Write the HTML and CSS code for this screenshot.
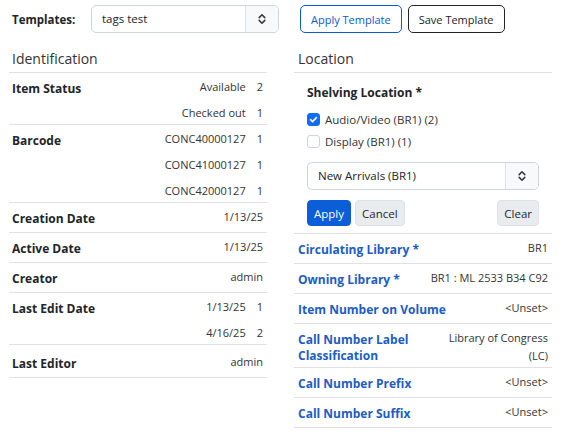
FILE: index.html
```html
<!DOCTYPE html>
<html lang="en">
<head>
<meta charset="utf-8">
<title>Item Attributes</title>
<link rel="stylesheet" href="styles.css">
</head>
<body>
<div class="toolbar">
  <span class="tpl-label">Templates:</span>
  <div class="select select-top">
    <span class="select-text">tags test</span>
    <span class="select-btn"><svg width="8" height="12" viewBox="0 0 8 12"><path d="M1.2 4.6 L4 1.8 L6.8 4.6 M1.2 7.4 L4 10.2 L6.8 7.4" fill="none" stroke="#343a40" stroke-width="1.6" stroke-linecap="round" stroke-linejoin="round"/></svg></span>
  </div>
  <div class="tpl-actions">
    <button class="btn btn-outline-primary">Apply Template</button>
    <button class="btn btn-outline-dark">Save Template</button>
  </div>
</div>

<div class="columns">
  <section class="col">
    <h2 class="col-title">Identification</h2>
    <div class="row">
      <div class="label">Item Status</div>
      <div class="values">
        <div class="val">Available<span class="count">2</span></div>
        <div class="val">Checked out<span class="count">1</span></div>
      </div>
    </div>
    <div class="row">
      <div class="label">Barcode</div>
      <div class="values">
        <div class="val">CONC40000127<span class="count">1</span></div>
        <div class="val">CONC41000127<span class="count">1</span></div>
        <div class="val">CONC42000127<span class="count">1</span></div>
      </div>
    </div>
    <div class="row">
      <div class="label">Creation Date</div>
      <div class="values"><div class="val">1/13/25</div></div>
    </div>
    <div class="row">
      <div class="label">Active Date</div>
      <div class="values"><div class="val">1/13/25</div></div>
    </div>
    <div class="row">
      <div class="label">Creator</div>
      <div class="values"><div class="val">admin</div></div>
    </div>
    <div class="row">
      <div class="label">Last Edit Date</div>
      <div class="values">
        <div class="val">1/13/25<span class="count">1</span></div>
        <div class="val">4/16/25<span class="count">2</span></div>
      </div>
    </div>
    <div class="row row-tall">
      <div class="label">Last Editor</div>
      <div class="values"><div class="val">admin</div></div>
    </div>
  </section>

  <section class="col">
    <h2 class="col-title">Location</h2>
    <div class="shelving">
      <div class="shelving-title">Shelving Location *</div>
      <div class="checks">
        <label class="check"><span class="box box-checked"><svg width="9" height="9" viewBox="0 0 9 9"><path d="M1.6 4.7 L3.6 6.6 L7.4 2.6" fill="none" stroke="#fff" stroke-width="1.6" stroke-linecap="round" stroke-linejoin="round"/></svg></span>Audio/Video (BR1) (2)</label>
        <label class="check"><span class="box"></span>Display (BR1) (1)</label>
      </div>
      <div class="select select-loc">
        <span class="select-text">New Arrivals (BR1)</span>
        <span class="select-btn"><svg width="8" height="12" viewBox="0 0 8 12"><path d="M1.2 4.6 L4 1.8 L6.8 4.6 M1.2 7.4 L4 10.2 L6.8 7.4" fill="none" stroke="#343a40" stroke-width="1.6" stroke-linecap="round" stroke-linejoin="round"/></svg></span>
      </div>
      <div class="shelving-actions">
        <button class="btn btn-sm btn-primary">Apply</button>
        <button class="btn btn-sm btn-light">Cancel</button>
        <button class="btn btn-sm btn-light btn-push">Clear</button>
      </div>
    </div>
    <div class="row">
      <div class="label label-link">Circulating Library *</div>
      <div class="values"><div class="val">BR1</div></div>
    </div>
    <div class="row">
      <div class="label label-link">Owning Library *</div>
      <div class="values"><div class="val">BR1 : ML 2533 B34 C92</div></div>
    </div>
    <div class="row">
      <div class="label label-link">Item Number on Volume</div>
      <div class="values"><div class="val">&lt;Unset&gt;</div></div>
    </div>
    <div class="row">
      <div class="label label-link">Call Number Label Classification</div>
      <div class="values values-narrow"><div class="val">Library of Congress (LC)</div></div>
    </div>
    <div class="row">
      <div class="label label-link">Call Number Prefix</div>
      <div class="values"><div class="val">&lt;Unset&gt;</div></div>
    </div>
    <div class="row">
      <div class="label label-link">Call Number Suffix</div>
      <div class="values"><div class="val">&lt;Unset&gt;</div></div>
    </div>
  </section>
</div>
</body>
</html>
```

FILE: styles.css
```css
* { box-sizing: border-box; }

body {
  margin: 0;
  font-family: "Open Sans", "Noto Sans", sans-serif;
  color: #212529;
  background: #fff;
}

.toolbar {
  display: flex;
  align-items: center;
  padding: 5px 0 0 12px;
}

.tpl-label {
  width: 79px;
  font-weight: 700;
  font-size: 11.5px;
}

.select {
  display: flex;
  height: 28px;
  border: 1px solid #ced4da;
  border-radius: 5px;
  overflow: hidden;
  background: #fff;
}

.select-top { width: 188px; }

.select-text {
  flex: 1;
  padding-left: 10px;
  font-size: 11.5px;
  line-height: 26px;
  color: #212529;
}

.select-btn {
  width: 33px;
  display: flex;
  align-items: center;
  justify-content: center;
  background: #f8f9fa;
  border-left: 1px solid #dee2e6;
}

.tpl-actions {
  display: flex;
  gap: 6px;
  margin-left: 21px;
}

.btn {
  font-family: inherit;
  font-size: 11px;
  height: 28px;
  padding: 0 10px;
  border-radius: 5px;
  background: #fff;
}

.btn-outline-primary { border: 1px solid #0d5bd1; color: #0d5bd1; }
.btn-outline-dark { border: 1px solid #212529; color: #212529; }

.columns {
  display: grid;
  grid-template-columns: 258px 258px;
  column-gap: 27px;
  padding-left: 9px;
}

.col-title {
  margin: 16px 0 0;
  padding: 0 3px 3px;
  font-size: 14px;
  font-weight: 500;
  line-height: 20px;
  color: #333;
  border-bottom: 1px solid #dee2e6;
}

.col + .col .col-title { padding-left: 4px; }

.row {
  display: flex;
  justify-content: space-between;
  gap: 8px;
  min-height: 30px;
  padding: 5px 4px 2px 3px;
  border-bottom: 1px solid #dee2e6;
}

.row-tall {
  min-height: 33px;
  padding-top: 8px;
}

.label {
  padding-top: 3px;
  font-size: 12px;
  font-weight: 700;
  line-height: 16px;
  color: #212529;
}

.label-link {
  color: #1c5cc7;
  padding-left: 1px;
}

.values {
  flex: 0 0 auto;
  text-align: right;
  font-size: 11px;
  color: #333;
}

.values-narrow { max-width: 118px; }

.val { line-height: 18px; }
.val + .val { margin-top: 8px; }

.count {
  display: inline-block;
  margin-left: 11px;
}

.shelving {
  padding: 11px 13px 7px;
  border-bottom: 1px solid #dee2e6;
}

.shelving-title {
  font-size: 12px;
  font-weight: 700;
  line-height: 18px;
}

.checks { margin-top: 6px; }

.check {
  display: flex;
  align-items: center;
  height: 22px;
  font-size: 11.5px;
  color: #333;
}

.box {
  width: 13px;
  height: 13px;
  margin-right: 5px;
  border: 1px solid #ced4da;
  border-radius: 3px;
  background: #fff;
  display: flex;
  align-items: center;
  justify-content: center;
}

.box-checked {
  background: #0d6efd;
  border-color: #0d6efd;
}

.select-loc {
  width: 232px;
  margin-top: 10px;
}

.shelving-actions {
  display: flex;
  gap: 4px;
  margin-top: 10px;
  width: 232px;
}

.btn-sm {
  height: 26px;
  padding: 0 6px;
  font-size: 11.5px;
  border-radius: 4px;
}

.btn-primary { background: #0b5ed7; border: 1px solid #0b5ed7; color: #fff; }
.btn-light { background: #e9ecef; border: 1px solid #dee2e6; color: #212529; }
.btn-push { margin-left: auto; }
```
